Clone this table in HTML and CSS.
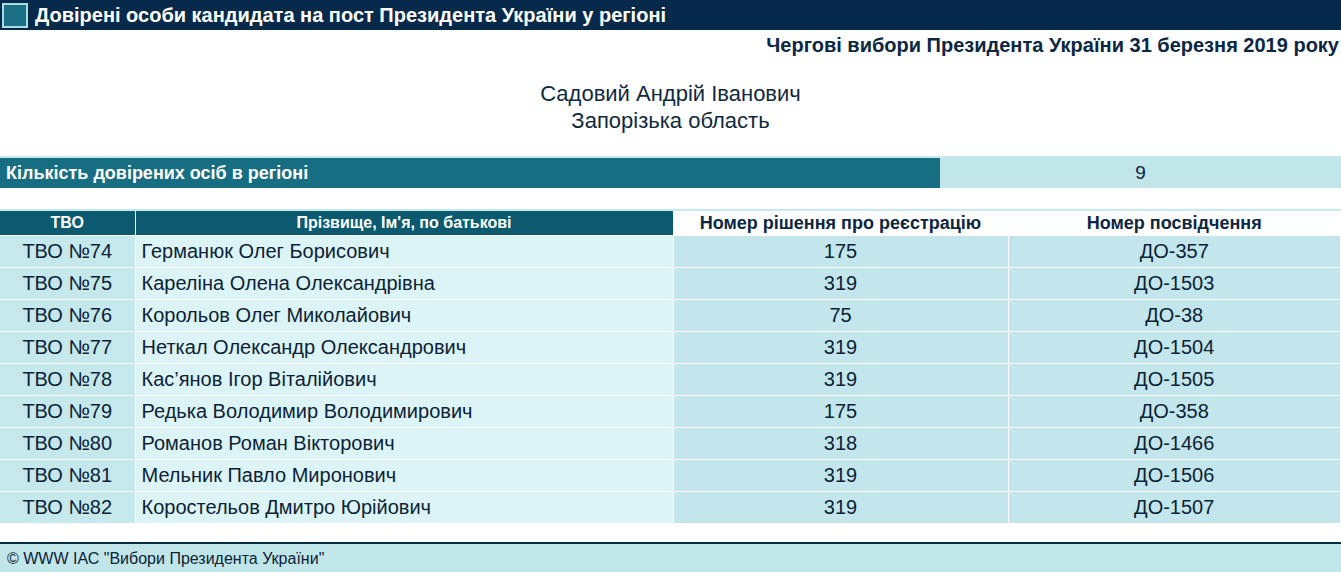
FILE: index.html
```html
<!DOCTYPE html>
<html lang="uk">
<head>
<meta charset="utf-8">
<title>Довірені особи</title>
<link rel="stylesheet" href="styles.css">
</head>
<body>
<div class="titlebar">
  <span class="ticon"></span>
  <span class="ttext">Довірені особи кандидата на пост Президента України у регіоні</span>
</div>
<div class="subtitle">Чергові вибори Президента України 31 березня 2019 року</div>
<div class="candidate">
  <div>Садовий Андрій Іванович</div>
  <div>Запорізька область</div>
</div>
<table class="summary">
  <colgroup><col class="s1"><col></colgroup>
  <tr><td class="slabel">Кількість довірених осіб в регіоні</td><td class="svalue">9</td></tr>
</table>
<table class="list">
  <colgroup><col class="c1"><col class="c2"><col class="c3"><col class="c4"></colgroup>
  <thead>
    <tr><th class="hd">ТВО</th><th class="hd">Прізвище, Ім'я, по батькові</th><th class="hl">Номер рішення про реєстрацію</th><th class="hl">Номер посвідчення</th></tr>
  </thead>
  <tbody>
    <tr><td class="tvo">ТВО №74</td><td class="nm">Германюк Олег Борисович</td><td class="num">175</td><td class="num">ДО-357</td></tr>
    <tr><td class="tvo">ТВО №75</td><td class="nm">Кареліна Олена Олександрівна</td><td class="num">319</td><td class="num">ДО-1503</td></tr>
    <tr><td class="tvo">ТВО №76</td><td class="nm">Корольов Олег Миколайович</td><td class="num">75</td><td class="num">ДО-38</td></tr>
    <tr><td class="tvo">ТВО №77</td><td class="nm">Неткал Олександр Олександрович</td><td class="num">319</td><td class="num">ДО-1504</td></tr>
    <tr><td class="tvo">ТВО №78</td><td class="nm">Кас’янов Ігор Віталійович</td><td class="num">319</td><td class="num">ДО-1505</td></tr>
    <tr><td class="tvo">ТВО №79</td><td class="nm">Редька Володимир Володимирович</td><td class="num">175</td><td class="num">ДО-358</td></tr>
    <tr><td class="tvo">ТВО №80</td><td class="nm">Романов Роман Вікторович</td><td class="num">318</td><td class="num">ДО-1466</td></tr>
    <tr><td class="tvo">ТВО №81</td><td class="nm">Мельник Павло Миронович</td><td class="num">319</td><td class="num">ДО-1506</td></tr>
    <tr><td class="tvo">ТВО №82</td><td class="nm">Коростельов Дмитро Юрійович</td><td class="num">319</td><td class="num">ДО-1507</td></tr>
  </tbody>
</table>
<div class="footer">© WWW ІАС "Вибори Президента України"</div>
</body>
</html>
```
FILE: styles.css
```css
html, body {
  margin: 0;
  padding: 0;
  background: #ffffff;
  font-family: "Liberation Sans", Arial, sans-serif;
  color: #0c2236;
}
.titlebar {
  height: 30px;
  background: #082a4a;
  display: flex;
  align-items: center;
  gap: 7px;
  padding-left: 2px;
  box-sizing: border-box;
}
.ticon {
  width: 22px;
  height: 21px;
  background: #1b7085;
  border: 2px solid #a9dbe3;
}
.ttext {
  color: #ffffff;
  font-weight: bold;
  font-size: 20px;
}
.subtitle {
  text-align: right;
  font-weight: bold;
  font-size: 20px;
  color: #0b2743;
  line-height: 24px;
  padding-top: 3px;
  padding-right: 2px;
}
.candidate {
  margin-top: 23px;
  text-align: center;
  font-size: 22px;
  line-height: 27px;
  color: #0f2a3e;
}
.summary {
  margin-top: 22px;
  width: 100%;
  border-collapse: collapse;
  table-layout: fixed;
  border-top: 2px solid #c6e9ee;
}
.s1 { width: 940px; }
.summary td {
  height: 30px;
  padding: 0;
}
.slabel {
  background: #176e82;
  color: #ffffff;
  font-weight: bold;
  font-size: 18px;
  padding-left: 6px !important;
}
.svalue {
  background: #c1e6ea;
  text-align: center;
  font-size: 19px;
}
.list {
  margin-top: 21px;
  width: 100%;
  border-collapse: collapse;
  table-layout: fixed;
  border-top: 2px solid #c6e9ee;
}
.c1 { width: 135px; }
.c2 { width: 538px; }
.c3 { width: 335px; }
.list th {
  height: 24px;
  padding: 0;
  font-size: 16px;
  font-weight: bold;
  border-right: 1px solid #ffffff;
}
.hd {
  background: #0b5a6f;
  color: #ffffff;
}
.hl {
  background: #ffffff;
  color: #0b2743;
  font-size: 18px !important;
}
.list td {
  height: 31px;
  padding: 0;
  font-size: 20px;
  border-right: 1px solid #ffffff;
  border-top: 1px solid #ffffff;
  background: #c2e6eb;
  color: #0c2236;
}
.list td.tvo { text-align: center; background: #c5e8ed; }
.list td.nm { padding-left: 6px; background: #dcf4f6; }
.list td.num { text-align: center; }
.footer {
  margin-top: 19px;
  border-top: 2px solid #0a2a44;
  background: #c1e6ea;
  height: 30px;
  line-height: 29px;
  font-size: 16px;
  padding-left: 7px;
  color: #0c2236;
}
```
